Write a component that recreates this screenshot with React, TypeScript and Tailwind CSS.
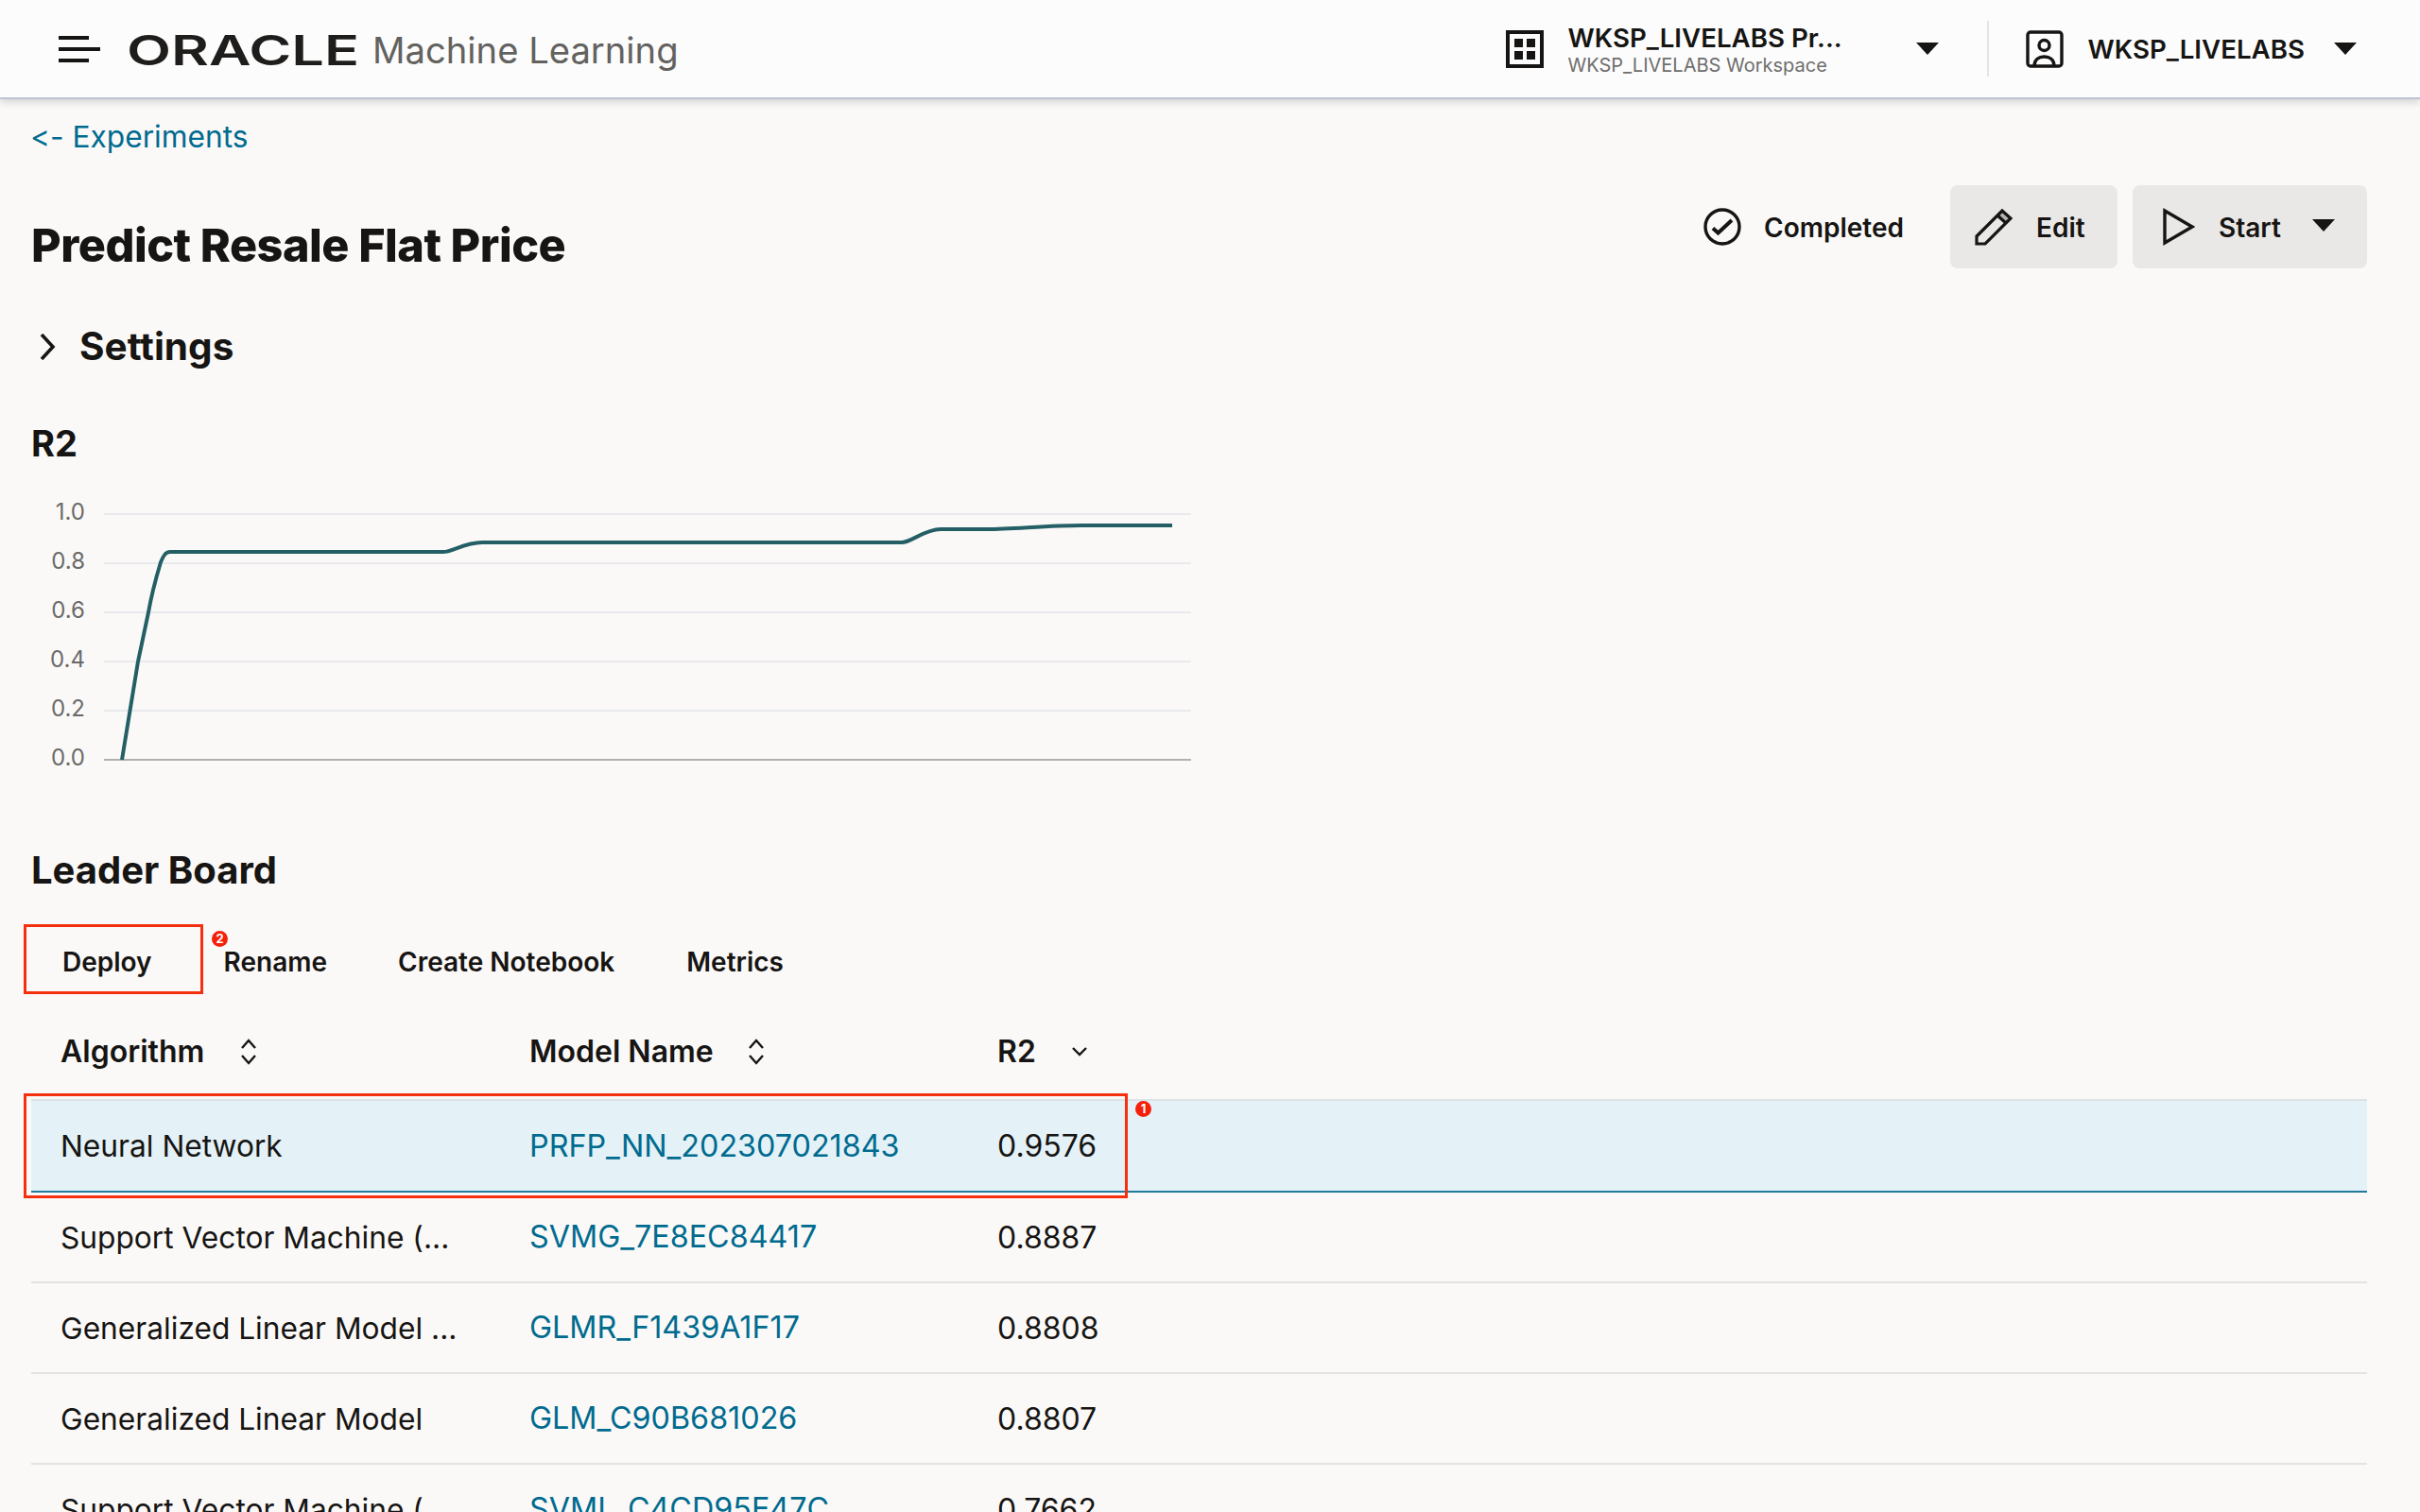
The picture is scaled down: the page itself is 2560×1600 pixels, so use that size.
const rows = [
  { algorithm: 'Neural Network', model: 'PRFP_NN_202307021843', r2: '0.9576', selected: true },
  { algorithm: 'Support Vector Machine (...', model: 'SVMG_7E8EC84417', r2: '0.8887' },
  { algorithm: 'Generalized Linear Model ...', model: 'GLMR_F1439A1F17', r2: '0.8808' },
  { algorithm: 'Generalized Linear Model', model: 'GLM_C90B681026', r2: '0.8807' },
  { algorithm: 'Support Vector Machine (...', model: 'SVML_C4CD95E47C', r2: '0.7662' },
];

const ticks = [
  { label: '1.0', y: 24 },
  { label: '0.8', y: 76 },
  { label: '0.6', y: 128 },
  { label: '0.4', y: 180 },
  { label: '0.2', y: 232 },
];

function Caret({ className = '' }: { className?: string }) {
  return (
    <svg width="24" height="13" viewBox="0 0 24 13" className={className}>
      <path d="M0 0h24L12 13z" fill="#161513" />
    </svg>
  );
}

function SortIcon() {
  return (
    <svg width="18" height="28" viewBox="0 0 18 28" fill="none" stroke="#161513" strokeWidth="2.4">
      <path d="M2 10l7-8 7 8M2 18l7 8 7-8" />
    </svg>
  );
}

function Header() {
  return (
    <header className="relative z-10 flex h-[105px] items-center justify-between border-b-2 border-[#bcc4d4] bg-[#fcfcfc] shadow-[0_3px_8px_rgba(0,0,0,0.16)]">
      <div className="flex items-center">
        <svg width="44" height="28" viewBox="0 0 44 28" className="ml-[62px]" fill="#161513">
          <path d="M0 0h32v4H0zM0 12h44v4H0zM0 24h32v4H0z" />
        </svg>
        <svg width="248" height="44" viewBox="0 0 248 44" className="ml-[28px] mt-[2px] overflow-visible">
          <text x="0" y="38" textLength="246" lengthAdjust="spacingAndGlyphs" fontFamily="Inter" fontSize="44" fontWeight="600" fill="#1e1d1b">
            ORACLE
          </text>
        </svg>
        <span className="ml-[12px] mt-[2px] text-[38.2px] leading-[48px] text-[#63625f]">Machine Learning</span>
      </div>
      <div className="mr-[67px] flex items-center">
        <svg width="40" height="40" viewBox="0 0 40 40" fill="none" stroke="#161513" strokeWidth="4">
          <path d="M2 2h36v36H2z" />
          <path d="M9 9h9v9H9zM22 9h9v9h-9zM9 22h9v9H9zM22 22h9v9h-9z" fill="#161513" stroke="none" />
        </svg>
        <div className="ml-[25px] w-[367px]">
          <div className="text-[27.7px] leading-[34px] font-semibold text-[#161513]">WKSP_LIVELABS Pr...</div>
          <div className="text-[20px] leading-[24px] text-[#6f6e6c]">WKSP_LIVELABS Workspace</div>
        </div>
        <Caret className="ml-[2px]" />
        <div className="ml-[51px] h-[59px] w-[2px] self-start bg-[#e5e5e4]" />
        <svg width="40" height="40" viewBox="0 0 40 40" fill="none" stroke="#161513" strokeWidth="3.4" className="ml-[39px]">
          <rect x="2" y="2" width="36" height="36" rx="3" />
          <circle cx="19.5" cy="16" r="5.5" />
          <path d="M9 38c0-7 5-10 10.5-10s10.5 3 10.5 10" />
        </svg>
        <span className="ml-[25px] text-[27.7px] leading-[34px] font-semibold text-[#161513]">WKSP_LIVELABS</span>
        <Caret className="ml-[31px]" />
      </div>
    </header>
  );
}

function TitleRow() {
  return (
    <div className="flex items-start justify-between">
      <h1 className="mt-[65px] text-[48.6px] leading-[60px] font-extrabold tracking-[-0.5px] text-[#161513]">Predict Resale Flat Price</h1>
      <div className="mt-[31px] flex items-center">
        <svg width="40" height="40" viewBox="0 0 40 40" fill="none" stroke="#161513" strokeWidth="3.4">
          <circle cx="20" cy="20" r="18" />
          <path d="M10 21.5l5.5 5L30 13" strokeWidth="4" />
        </svg>
        <span className="ml-[24px] mt-[1px] text-[28px] font-semibold text-[#161513]">Completed</span>
        <button className="ml-[49px] flex h-[88px] w-[177px] items-center rounded-lg bg-[#e9e8e6] pl-[26px]">
          <svg width="40" height="40" viewBox="0 0 40 40" fill="none" stroke="#161513" strokeWidth="3.2">
            <path d="M2 38v-8L29 3l9 8-27 27z" />
            <path d="M24 8l9 8" />
            <path d="M29 3l9 8-4 4-9-8z" fill="#161513" stroke="none" opacity="0.25" />
          </svg>
          <span className="ml-[25px] mt-[1px] text-[28px] font-semibold text-[#161513]">Edit</span>
        </button>
        <button className="ml-[16px] flex h-[88px] w-[248px] items-center rounded-lg bg-[#e9e8e6] pl-[32px]">
          <svg width="34" height="40" viewBox="0 0 34 40" fill="none" stroke="#161513" strokeWidth="3.4">
            <path d="M2 3v34l29-17z" />
          </svg>
          <span className="ml-[25px] mt-[1px] text-[28px] font-semibold text-[#161513]">Start</span>
          <Caret className="ml-[33px] -mt-[4px]" />
        </button>
      </div>
    </div>
  );
}

function Chart() {
  return (
    <svg width="1240" height="310" viewBox="0 0 1240 310" className="-ml-[3px] mt-[27px]" fontFamily="Inter" fontSize="24" fill="#6b6a68">
      {ticks.map((t) => (
        <g key={t.label}>
          <line x1="80" x2="1230" y1={t.y} y2={t.y} stroke="#e8eaed" strokeWidth="2" />
          <text x="60" y={t.y + 6} textAnchor="end">{t.label}</text>
        </g>
      ))}
      <line x1="80" x2="1230" y1="284" y2="284" stroke="#b3b1ae" strokeWidth="2" />
      <text x="60" y="290" textAnchor="end">0.0</text>
      <path
        d="M99 284L116 180L127 128C131 105 137 85 140 75C143 68 145 64 150 64H439C448 64 462 54 480 54H924C934 54 948 40 965 40H1015C1040 40 1080 36 1114 36H1210"
        fill="none"
        stroke="#245f66"
        strokeWidth="4"
      />
    </svg>
  );
}

function Toolbar() {
  const actions = [
    { label: 'Deploy', className: 'ml-[33px]' },
    { label: 'Rename', className: 'ml-[76px]' },
    { label: 'Create Notebook', className: 'ml-[75px]' },
    { label: 'Metrics', className: 'ml-[76px]' },
  ];
  return (
    <div className="relative mt-[35px] flex h-[76px] items-center text-[28px] font-semibold text-[#161513]">
      {actions.map((a) => (
        <button key={a.label} className={a.className}>{a.label}</button>
      ))}
      <div className="absolute -left-[8px] -top-[2px] h-[74px] w-[190px] border-[3px] border-[#f5300f]" />
      <Badge value="2" className="left-[191px] top-[5px]" />
    </div>
  );
}

function Badge({ value, className }: { value: string; className: string }) {
  return (
    <span className={`absolute flex h-[17px] w-[17px] items-center justify-center rounded-full bg-[#f5200a] text-[13px] leading-none font-bold text-white ${className}`}>
      {value}
    </span>
  );
}

function LeaderTable() {
  return (
    <div className="relative mt-[7px] text-[32px]">
      <div className="flex h-[100px] items-center font-semibold text-[#161513]">
        <div className="flex w-[527px] items-center pl-[31px]">
          Algorithm
          <span className="ml-[38px] flex"><SortIcon /></span>
        </div>
        <div className="flex w-[495px] items-center">
          Model Name
          <span className="ml-[36px] flex"><SortIcon /></span>
        </div>
        <div className="flex items-center">
          R2
          <svg width="18" height="10" viewBox="0 0 18 10" fill="none" stroke="#161513" strokeWidth="2.4" className="ml-[37px]">
            <path d="M2 1l7 7 7-7" />
          </svg>
        </div>
      </div>
      {rows.map((row) => (
        <div
          key={row.model}
          className={`flex items-center pt-[1px] ${
            row.selected
              ? 'h-[99px] border-t-2 border-b-2 border-t-[#dde3e6] border-b-[#1f7a9c] bg-[#e4f1f7]'
              : 'h-[96px] border-b-2 border-[#e4e3e1]'
          }`}
        >
          <div className="w-[527px] pl-[31px] text-[31.7px] text-[#161513]">{row.algorithm}</div>
          <div className="w-[495px] text-[32.3px] text-[#006b8f]">{row.model}</div>
          <div className="text-[#161513]">{row.r2}</div>
        </div>
      ))}
      <div className="absolute -left-[8px] top-[94px] h-[111px] w-[1168px] border-[3px] border-[#f5300f]" />
      <Badge value="1" className="left-[1168px] top-[102px]" />
    </div>
  );
}

export default function App() {
  return (
    <div className="h-screen overflow-hidden bg-[#fbf9f8] font-['Inter',sans-serif]">
      <Header />
      <main className="pl-[33px] pr-[56px]">
        <a className="-ml-[1px] block pt-[20px] text-[31.7px] leading-[40px] text-[#006b8f] [font-feature-settings:'calt'_0]">&lt;- Experiments</a>
        <TitleRow />
        <div className="mt-[53px] flex items-center">
          <svg width="18" height="28" viewBox="0 0 18 28" fill="none" stroke="#161513" strokeWidth="3.6" className="ml-[8px]">
            <path d="M3 1l12 13L3 27" />
          </svg>
          <h2 className="ml-[25px] text-[40.5px] leading-[48px] font-bold text-[#161513]">Settings</h2>
        </div>
        <h2 className="mt-[54px] text-[38px] leading-[48px] font-bold text-[#161513]">R2</h2>
        <Chart />
        <h2 className="mt-[67px] text-[40px] leading-[48px] font-bold text-[#161513]">Leader Board</h2>
        <Toolbar />
        <LeaderTable />
      </main>
    </div>
  );
}
